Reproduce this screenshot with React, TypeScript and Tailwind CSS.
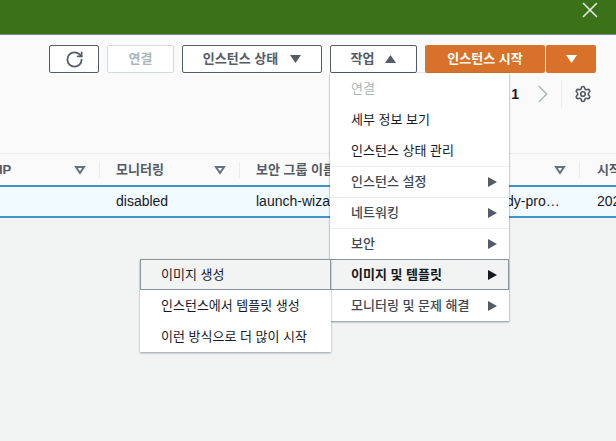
import React from 'react';
import { ChevronRight, RotateCw, Settings, X } from 'lucide-react';

const font = "font-['Liberation_Sans','Noto_Sans_CJK_KR',sans-serif]";

const Tri = ({ dir, className = '' }: { dir: 'up' | 'down' | 'right'; className?: string }) => {
  if (dir === 'right') {
    return (
      <svg width="9" height="10" viewBox="0 0 9 10" className={`shrink-0 ${className}`} fill="currentColor">
        <polygon points="0,0 9,5 0,10" />
      </svg>
    );
  }
  return (
    <svg width="11" height="8" viewBox="0 0 11 8" className={`shrink-0 ${className}`} fill="currentColor">
      <polygon points={dir === 'up' ? '0,8 11,8 5.5,0' : '0,0 11,0 5.5,8'} />
    </svg>
  );
};

const FilterArrow = () => (
  <svg width="12" height="10" viewBox="0 0 12 10" fill="none" stroke="#687078" strokeWidth="2" className="shrink-0">
    <polygon points="2,2 10,2 6,8" />
  </svg>
);

const Button = ({ className = '', children }: { className?: string; children: React.ReactNode }) => (
  <button className={`h-[28px] border border-[#545b64] rounded-[2px] bg-white text-[#545b64] text-[13px] font-bold flex items-center justify-center ${className}`}>
    {children}
  </button>
);

const HeaderCell = ({ label, className }: { label: string; className: string }) => (
  <div className={`shrink-0 h-full flex items-center overflow-hidden ${className}`}>
    <span className="text-[13px] font-bold text-[#545b64] whitespace-nowrap">{label}</span>
  </div>
);

const Divider = () => <div className="shrink-0 w-px h-[16px] bg-[#eaeded]" />;

const MenuRow = ({ label, sub, disabled, bold, active, sep }: { label: string; sub?: boolean; disabled?: boolean; bold?: boolean; active?: boolean; sep?: boolean }) => {
  const tone = disabled ? 'text-[#aab7b8]' : sub && !active ? 'text-[#414750] font-medium' : 'text-[#16191f]';
  const box = active ? 'bg-[#f2f3f3] border border-[#879596] pl-[20px] pr-[11px]' : 'pl-[21px] pr-[12px]';
  return (
    <div className={`h-[31px] flex items-center justify-between text-[13px] whitespace-nowrap ${tone} ${box} ${bold ? 'font-bold' : ''} ${sep ? 'border-t border-[#eaeded]' : ''}`}>
      <span>{label}</span>
      {sub && <Tri dir="right" className={active ? 'text-[#16191f]' : 'text-[#545b64]'} />}
    </div>
  );
};

const App = () => (
  <div className={`relative w-[616px] h-[441px] overflow-hidden bg-[#f2f3f3] ${font}`}>
    <div className="h-[35px] bg-[#3b7119] border-b border-[#7d8998] flex justify-end items-start pr-[13px]">
      <X size={26} className="text-[#e3ecde] -mt-[3px]" strokeWidth={1.5} />
    </div>

    <div className="h-[118px] bg-[#fafafa] pt-[10px] pr-[20px] flex flex-col items-end">
      <div className="flex items-center gap-[8px]">
        <Button className="w-[50px]"><RotateCw size={19} strokeWidth={2.2} /></Button>
        <Button className="w-[67px] !border-[#d5dbdb] !text-[#aab7b8]">연결</Button>
        <Button className="w-[140px] gap-[12px]">인스턴스 상태 <Tri dir="down" /></Button>
        <Button className="w-[87px] gap-[11px]">작업 <Tri dir="up" /></Button>
        <div className="flex gap-[1px]">
          <button className="w-[120px] h-[28px] rounded-[2px] bg-[#d8722a] text-white text-[13px] font-bold">인스턴스 시작</button>
          <button className="w-[50px] h-[28px] rounded-[2px] bg-[#d8722a] text-white flex items-center justify-center"><Tri dir="down" /></button>
        </div>
      </div>
      <div className="mt-[7px] h-[28px] flex items-center">
        <span className="text-[14px] font-bold text-[#16191f]">1</span>
        <ChevronRight size={30} strokeWidth={1.2} className="ml-[9px] text-[#aab7b8]" />
        <div className="ml-[3px] w-px h-[28px] bg-[#eaeded]" />
        <Settings size={18} strokeWidth={2.2} className="ml-[12px] mr-[4px] text-[#545b64]" />
      </div>
    </div>

    <div className="h-[32px] bg-[#fafafa] border-t border-[#eaeded] flex items-center overflow-hidden">
      <div className="w-[99px] shrink-0 h-full flex items-center justify-between pr-[13px]">
        <span className="text-[13px] font-bold text-[#545b64] -ml-[1px]">IP</span>
        <FilterArrow />
      </div>
      <Divider />
      <HeaderCell label="모니터링" className="w-[114px] pl-[16px]" />
      <FilterArrow />
      <div className="ml-[13px]"><Divider /></div>
      <HeaderCell label="보안 그룹 이름" className="w-[314px] pl-[16px]" />
      <FilterArrow />
      <div className="ml-[13px]"><Divider /></div>
      <HeaderCell label="시작 시간" className="pl-[17px]" />
    </div>

    <div className="h-[33px] bg-[#f1faff] border-y-[2px] border-[#3f96c4] flex items-center text-[14px] text-[#16191f] whitespace-nowrap overflow-hidden">
      <span className="ml-[116px] w-[140px] shrink-0">disabled</span>
      <span className="w-[250px] shrink-0">launch-wizard-1</span>
      <span className="w-[91px] shrink-0">dy-pro…</span>
      <span>2023</span>
    </div>

    {/* actions menu */}
    <div className="absolute left-[330px] top-[73px] w-[179px] bg-white shadow-[0_1px_2px_rgba(0,28,36,0.4),0_0_0_1px_rgba(0,28,36,0.06)]">
      <MenuRow label="연결" disabled />
      <MenuRow label="세부 정보 보기" />
      <MenuRow label="인스턴스 상태 관리" />
      <MenuRow label="인스턴스 설정" sub sep />
      <MenuRow label="네트워킹" sub sep />
      <MenuRow label="보안" sub sep />
      <MenuRow label="이미지 및 템플릿" sub bold active />
      <MenuRow label="모니터링 및 문제 해결" sub />
    </div>

    {/* submenu */}
    <div className="absolute left-[140px] top-[259px] w-[191px] bg-white shadow-[0_1px_2px_rgba(0,28,36,0.4)]">
      <MenuRow label="이미지 생성" active />
      <MenuRow label="인스턴스에서 템플릿 생성" />
      <MenuRow label="이런 방식으로 더 많이 시작" />
    </div>
  </div>
);

export default App;
